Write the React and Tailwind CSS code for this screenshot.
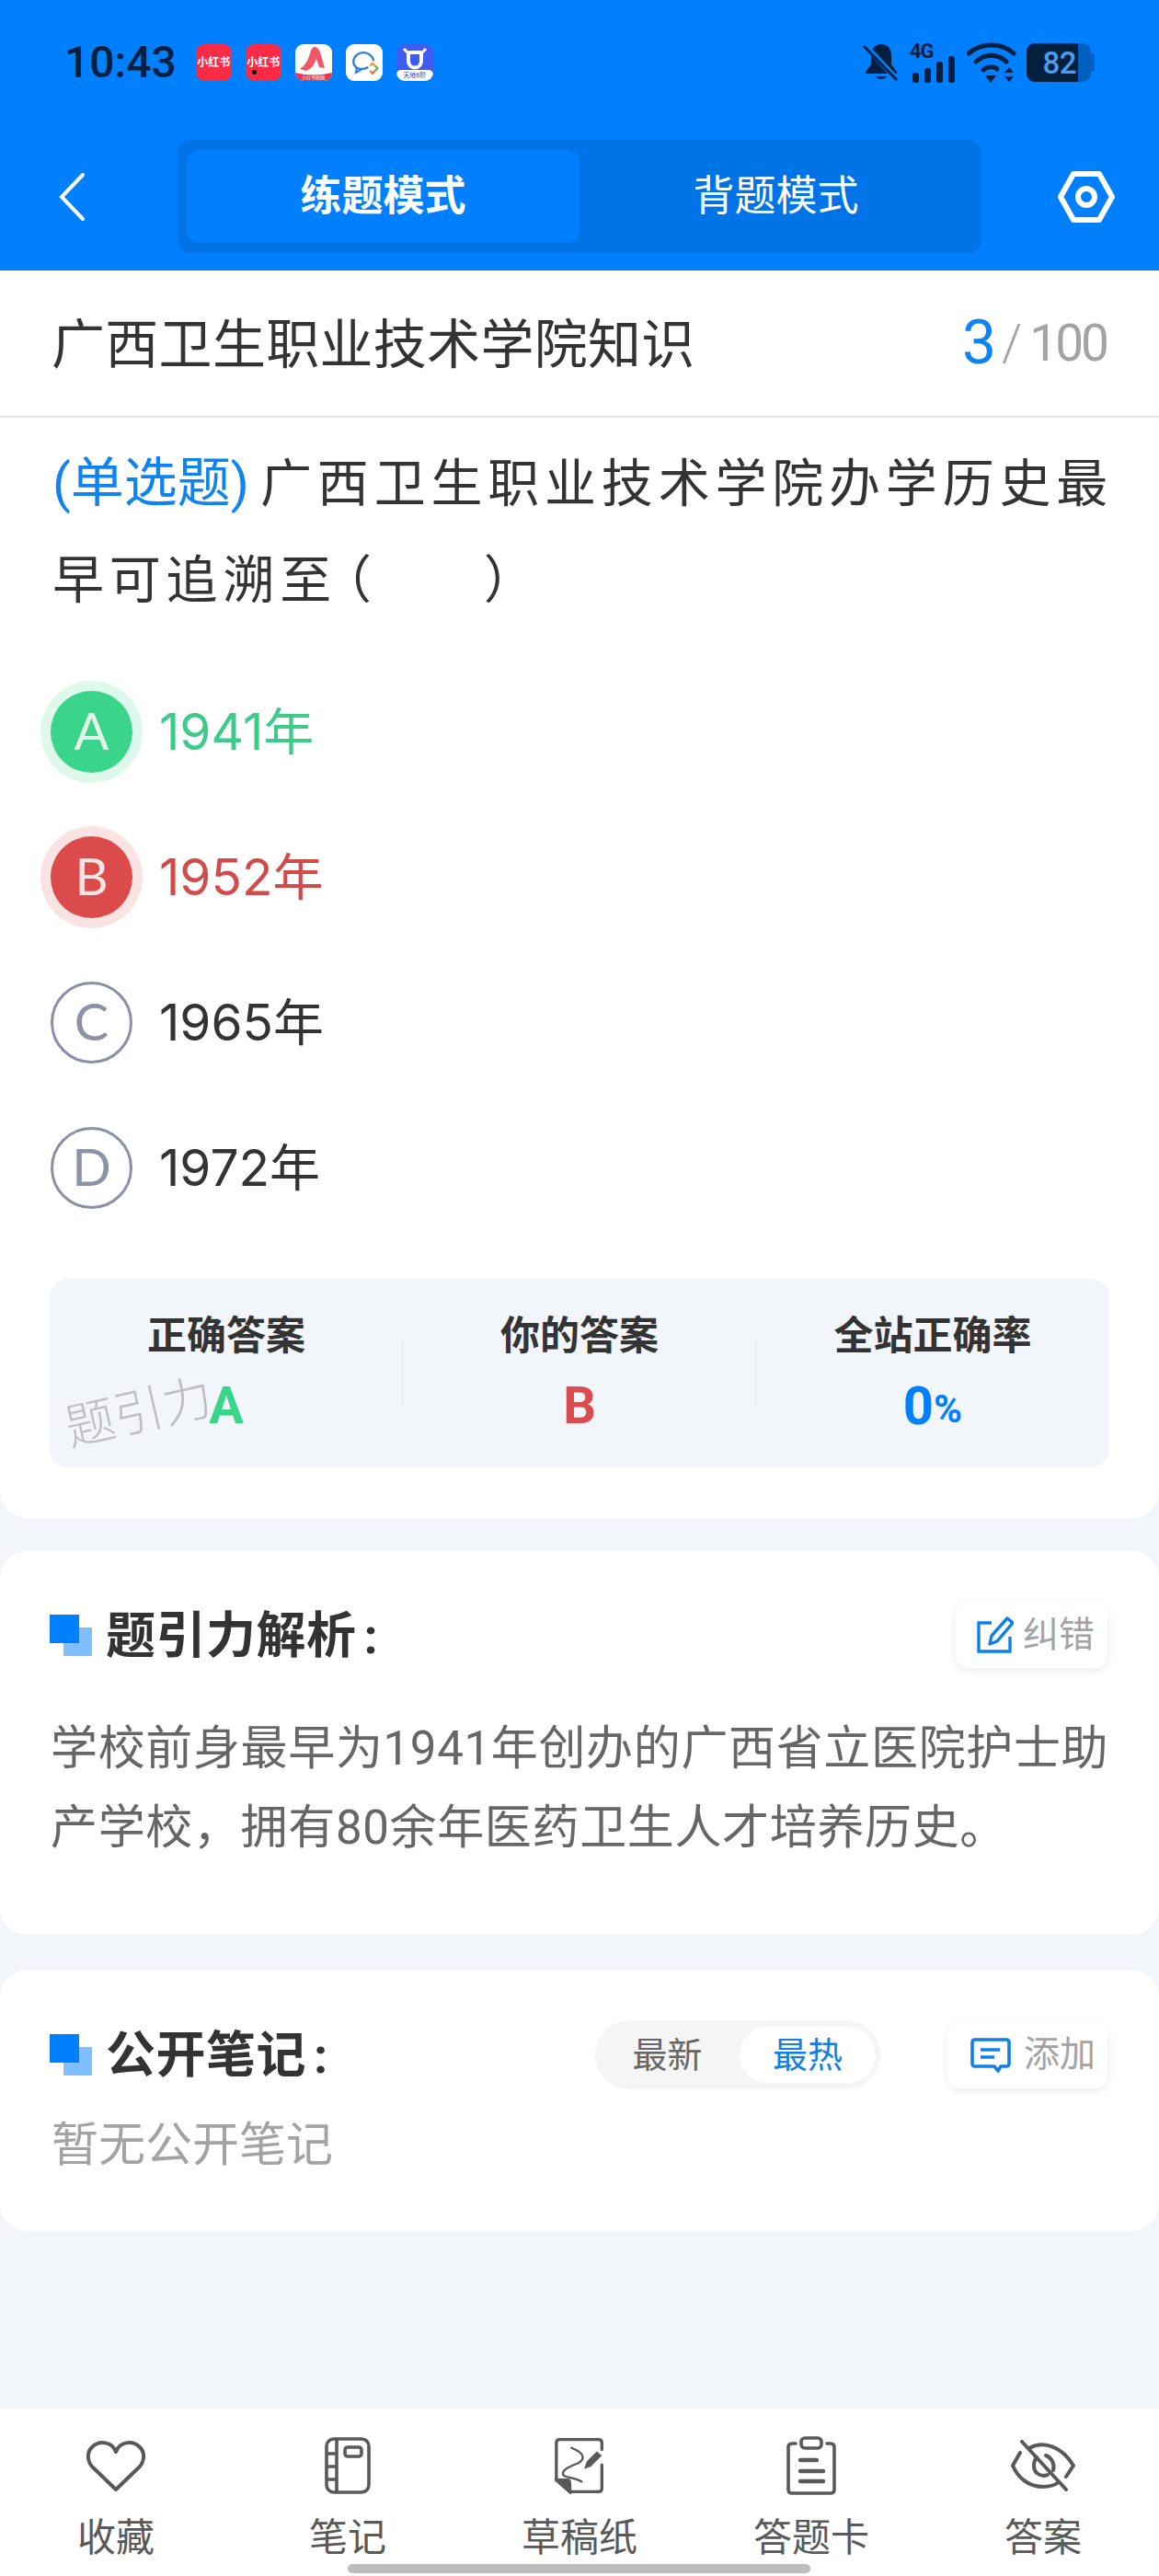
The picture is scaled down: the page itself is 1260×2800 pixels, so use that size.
import React from 'react';

const SquareMark = () => (
  <div className="relative w-[46px] h-[45px] shrink-0">
    <div className="absolute left-[15px] top-[14px] w-[31px] h-[31px] bg-[#80bfff]" />
    <div className="absolute left-0 top-0 w-[32px] h-[31px] bg-[#0080ff]" />
  </div>
);

const RedBookIcon = ({ dot }) => (
  <div className="relative w-[39px] h-[40px] rounded-[9px] bg-[#fb2a45] flex items-center justify-center">
    <span className="text-white text-[12px] font-bold leading-none whitespace-nowrap">小红书</span>
    {dot && <span className="absolute left-[5px] bottom-[5px] w-[9px] h-[9px] rounded-full bg-black border-2 border-[#fb2a45]" />}
  </div>
);

const AppIcons = () => (
  <div className="flex gap-[15px] ml-[21px]">
    <RedBookIcon />
    <RedBookIcon dot />
    <div className="relative w-[40px] h-[40px] rounded-[9px] bg-white overflow-hidden">
      <svg viewBox="0 0 40 40" className="w-full h-full">
        <path d="M5 27Q13 22 16 10Q18 2 22 3Q26 4 28 12L32 26L26 25L23 16Q19 27 12 29Z" fill="#f0586a" />
        <path d="M0 31Q20 36 40 31V40H0Z" fill="#e8344b" />
      </svg>
      <span className="absolute left-0 right-0 bottom-[1px] text-center text-white text-[5px] leading-none">小红书刷题</span>
    </div>
    <div className="w-[40px] h-[40px] rounded-[9px] bg-white flex items-center justify-center">
      <svg viewBox="0 0 40 40" className="w-[36px] h-[36px]" fill="none">
        <path d="M24 26C16 30 7 27 7 19C7 12 13 8 19 8C25 8 30 12 31 17" stroke="#2d7fd8" strokeWidth="2.6" strokeLinecap="round" />
        <path d="M11 26L10 32L16 29" stroke="#2d7fd8" strokeWidth="2.4" />
        <path d="M27 24L30 21L33 24" stroke="#f0a020" strokeWidth="2.4" />
        <path d="M33 24L36 27L33 30" stroke="#58b848" strokeWidth="2.4" />
        <path d="M33 30L30 33L27 30" stroke="#e8683a" strokeWidth="2.4" />
      </svg>
    </div>
    <div className="relative w-[40px] h-[40px] rounded-[9px] bg-[#3f5bf0] overflow-hidden">
      <svg viewBox="0 0 40 40" className="w-full h-full" fill="none">
        <path d="M13 9V18C13 28 27 28 27 18V9M13 9H27" stroke="white" strokeWidth="4" />
        <path d="M8 5L13 10M32 5L27 10" stroke="white" strokeWidth="3" />
      </svg>
      <div className="absolute left-0 right-0 bottom-0 h-[12px] bg-white rounded-t-[5px] text-center text-[#2d3fb0] text-[7px] leading-[12px] whitespace-nowrap">天地6阶</div>
    </div>
  </div>
);

const StatusIcons = () => (
  <div className="flex items-center text-[#03203f]">
    <svg viewBox="0 0 40 42" className="w-[40px] h-[42px]">
      <path d="M20 1C13 1 9 6 9 13V23L3 31V33H37V31L31 23V13C31 6 27 1 20 1Z" fill="#03203f" />
      <path d="M14 36C15 40 25 40 26 36Z" fill="#03203f" />
      <path d="M1 1L38 40" stroke="#0080ff" strokeWidth="6" />
      <path d="M1 3L37 40" stroke="#03203f" strokeWidth="3" />
    </svg>
    <svg viewBox="0 0 50 44" className="w-[50px] h-[44px] ml-[11px] overflow-visible">
      <text x="0" y="17" fontSize="22" fontWeight="700" fontFamily="Roboto, sans-serif" letterSpacing="-1" fill="#03203f">4G</text>
      <rect x="3" y="33" width="7" height="11" rx="2.5" fill="#03203f" />
      <rect x="16" y="28" width="7" height="16" rx="2.5" fill="#03203f" />
      <rect x="29" y="21" width="7" height="23" rx="2.5" fill="#03203f" />
      <rect x="42" y="15" width="7" height="29" rx="2.5" fill="#03203f" />
    </svg>
    <svg viewBox="0 0 54 44" className="w-[54px] h-[44px] ml-[12px]" fill="none" stroke="#03203f" strokeWidth="5" strokeLinecap="round">
      <path d="M2 12C16 0 38 0 51 12" />
      <path d="M10 21C20 12 33 12 43 21" />
      <path d="M18 30C22 26 30 26 33 29" />
      <path d="M20 36H32L26 44Z" fill="#03203f" stroke="none" />
      <path d="M46 27L51 33H41Z" fill="#03203f" stroke="none" />
      <path d="M41 37H51L46 43Z" fill="#03203f" stroke="none" />
    </svg>
    <div className="flex items-center ml-[11px]">
      <div className="w-[70px] h-[42px] rounded-[9px] bg-[#0060bf] overflow-hidden flex">
        <div className="w-[56px] h-full bg-[#03203f] flex items-center justify-end pr-[2px] font-['Roboto',sans-serif] text-[#4a9df0] text-[33px] font-medium leading-none tracking-[-0.5px]">82</div>
      </div>
      <div className="w-[4px] h-[20px] rounded-r-[3px] bg-[#0060bf]" />
    </div>
  </div>
);

const Option = ({ letter, text, state }) => {
  let circle = 'border-[3px] border-[#8a90a5] text-[#8c93a8]';
  let label = 'text-[#333333]';
  if (state === 'right') {
    circle = 'bg-[#3ad48a] text-[#dff8ea] shadow-[0_0_0_11px_#def8ec]';
    label = 'text-[#3ecb8a]';
  }
  if (state === 'wrong') {
    circle = 'bg-[#dc4b4b] text-[#fbe4e4] shadow-[0_0_0_11px_#fae3e3]';
    label = 'text-[#d34a4a]';
  }
  return (
    <div className="h-[158px] flex items-center">
      <div className={`w-[89px] h-[89px] rounded-full flex items-center justify-center ml-px font-['Lato',sans-serif] text-[56px] leading-none pb-[2px] ${circle}`}>
        {letter}
      </div>
      <span className={`ml-[29px] font-['Inter','Noto_Sans_CJK_SC',sans-serif] text-[55px] leading-none ${label}`}>{text}</span>
    </div>
  );
};

const Stat = ({ title, children, divider }) => (
  <div className="relative flex-1 flex flex-col items-center">
    {divider && <div className="absolute right-0 top-[67px] h-[72px] w-px bg-[#e6e8ea]" />}
    <div className="mt-[37px] text-[43px] leading-[50px] font-bold text-[#333333] whitespace-nowrap">{title}</div>
    <div className="mt-[26px] h-[50px] flex items-center justify-center">{children}</div>
  </div>
);

const Tab = ({ label, children }) => (
  <div className="flex flex-col items-center pt-[29px]">
    <div className="h-[66px] flex items-center justify-center">{children}</div>
    <div className="mt-[21px] text-[42px] leading-[50px] text-[#595959] whitespace-nowrap">{label}</div>
  </div>
);

const App = () => (
  <div className="relative w-[1260px] h-[2800px] flex flex-col bg-[#f2f5f9] overflow-hidden font-['Roboto','Noto_Sans_CJK_SC',sans-serif]">
    <header className="h-[294px] shrink-0 bg-[#0080ff]">
      <div className="h-[136px] flex items-center pl-[70px] pr-[70px]">
        <span className="text-[48px] leading-none text-[#03203f] font-medium">10:43</span>
        <AppIcons />
        <div className="ml-auto">
          <StatusIcons />
        </div>
      </div>
      <div className="mt-[16px] flex items-center pl-[64px]">
        <svg viewBox="0 0 28 52" className="w-[28px] h-[52px]" fill="none" stroke="white" strokeWidth="4" strokeLinecap="round">
          <path d="M26 2L3 26L26 50" />
        </svg>
        <div className="ml-[101px] w-[874px] h-[123px] rounded-[14px] bg-[#0073e6] p-[10px] pt-[11px] flex">
          <div className="flex-1 h-[101px] rounded-[14px] bg-[#0080ff] flex items-center justify-center text-[45px] font-bold text-white">练题模式</div>
          <div className="flex-1 h-[101px] flex items-center justify-center text-[45px] text-white">背题模式</div>
        </div>
        <svg viewBox="0 0 62 56" className="ml-[83px] w-[62px] h-[56px]" fill="none" stroke="white">
          <path d="M17 3H45L59 28L45 53H17L3 28Z" strokeWidth="6" strokeLinejoin="round" />
          <circle cx="31" cy="28" r="9" strokeWidth="6" />
        </svg>
      </div>
    </header>

    <main className="relative bg-white rounded-b-[30px] px-[54px] pb-[55px]">
      <div className="-mx-[54px] px-[57px] h-[160px] flex items-center justify-between border-b-2 border-[#e3e3e3]">
        <span className="text-[58px] leading-none text-[#333333] -ml-[1px] pt-[3px] tracking-[0.3px]">广西卫生职业技术学院知识</span>
        <span className="flex items-center">
          <span className="text-[66px] leading-none text-[#0f84f0]">3</span>
          <span className="text-[56px] leading-none text-[#a3a3a3] font-light ml-[6px]">/</span>
          <span className="text-[55px] leading-none text-[#a3a3a3] ml-[8px] tracking-[-3px]">100</span>
        </span>
      </div>
      <p className="mt-[19px] text-[56px] leading-[105px] tracking-[5.8px] text-[#333333] ml-[3px] -mr-[10px]">
        <span className="text-[58px] text-[#0f84f0] tracking-[0px] mr-[12px]">(单选题)</span>广西卫生职业技术学院办学历史最早可追溯至<span className="-ml-[18px]">（</span><span className="inline-block w-[116px]" />）
      </p>
      <div className="mt-[32px]">
        <Option letter="A" text="1941年" state="right" />
        <Option letter="B" text="1952年" state="wrong" />
        <Option letter="C" text="1965年" />
        <Option letter="D" text="1972年" />
      </div>
      <div className="relative mt-[42px] h-[205px] rounded-[20px] bg-[#f2f5f9] flex">
        <Stat title="正确答案" divider>
          <span className="text-[56px] font-bold text-[#3ad48a] leading-none">A</span>
        </Stat>
        <Stat title="你的答案" divider>
          <span className="text-[56px] font-bold text-[#d94c4f] leading-none">B</span>
        </Stat>
        <Stat title="全站正确率">
          <span className="text-[58px] font-bold text-[#0080ff] leading-none">0</span>
          <span className="text-[42px] font-bold text-[#0080ff] leading-none mt-[8px]">%</span>
        </Stat>
        <span className="absolute left-[16px] top-[119px] -rotate-[13deg] text-[54px] leading-none font-light text-[#bdbfc2] whitespace-nowrap">题引力</span>
      </div>
    </main>

    <section className="mt-[36px] bg-white rounded-[30px] pl-[54px] pr-[56px] pt-[55px] pb-[73px]">
      <div className="h-[72px] flex items-center justify-between">
        <div className="flex items-center">
          <SquareMark />
          <span className="ml-[15px] pt-[3px] text-[54px] leading-none font-bold text-[#333333] tracking-[0.5px]">题引力解析<span className="ml-[8px]">:</span></span>
        </div>
        <div className="w-[165px] h-[72px] rounded-[14px] bg-white shadow-[0_3px_10px_rgba(0,0,0,0.08)] flex items-center pl-[23px]">
          <svg viewBox="0 0 40 40" className="w-[40px] h-[40px]" fill="none" stroke="#1080e8" strokeWidth="3.4">
            <path d="M16 7H2V38H36V22" />
            <path d="M33 2L39 7L22 27L14 30L16 21Z" strokeLinejoin="round" />
          </svg>
          <span className="ml-[10px] text-[39px] leading-none text-[#a3a3a3]">纠错</span>
        </div>
      </div>
      <p className="mt-[45px] text-[51px] leading-[86px] text-[#666666] -mr-[6px] ml-[1px] tracking-[0.65px]">
        学校前身最早为1941年创办的广西省立医院护士助产学校，拥有80余年医药卫生人才培养历史。
      </p>
    </section>

    <section className="mt-[38px] bg-white rounded-[30px] pl-[54px] pr-[56px] pt-[55px] pb-[58px]">
      <div className="h-[75px] flex items-center">
        <SquareMark />
        <span className="ml-[15px] pt-[3px] text-[54px] leading-none font-bold text-[#333333] tracking-[0.5px]">公开笔记<span className="ml-[8px]">:</span></span>
        <div className="ml-auto w-[310px] h-[75px] rounded-full bg-[#f5f5f5] flex items-center pr-[5px]">
          <span className="w-[157px] text-center text-[38px] leading-none text-[#666666]">最新</span>
          <span className="w-[148px] h-[61px] rounded-full bg-white flex items-center justify-center text-[38px] leading-none text-[#1080e8]">最热</span>
        </div>
        <div className="ml-[73px] w-[174px] h-[73px] rounded-[14px] bg-white shadow-[0_3px_10px_rgba(0,0,0,0.08)] flex items-center pl-[25px]">
          <svg viewBox="0 0 44 38" className="w-[44px] h-[38px]" fill="none" stroke="#1080e8" strokeWidth="3.6">
            <path d="M5 2H39Q42 2 42 5V28Q42 31 39 31H33L30 36L26 31H5Q2 31 2 28V5Q2 2 5 2Z" strokeLinejoin="round" />
            <path d="M11 13H32M11 21H26" />
          </svg>
          <span className="ml-[14px] text-[39px] leading-none text-[#a3a3a3]">添加</span>
        </div>
      </div>
      <p className="mt-[26px] text-[51px] leading-[70px] text-[#a3a3a3] ml-[2px]">暂无公开笔记</p>
    </section>

    <nav className="mt-auto h-[182px] bg-white grid grid-cols-5">
      <Tab label="收藏">
        <svg viewBox="0 0 64 56" className="w-[64px] h-[56px]" fill="none" stroke="#595959" strokeWidth="4" strokeLinejoin="round">
          <path d="M32 13C28 2 14 0 6 8C0 14 1 23 6 29L32 54L58 29C63 23 64 14 58 8C50 0 36 2 32 13Z" />
        </svg>
      </Tab>
      <Tab label="笔记">
        <svg viewBox="0 0 50 62" className="w-[50px] h-[62px]" fill="none" stroke="#595959" strokeWidth="3.6">
          <rect x="2" y="2" width="46" height="58" rx="8" />
          <path d="M13 2V60M2 18H13M2 32H13M2 46H13" />
          <rect x="22" y="11" width="18" height="10" rx="3" />
        </svg>
      </Tab>
      <Tab label="草稿纸">
        <svg viewBox="0 0 60 66" className="w-[55px] h-[62px]" fill="none" stroke="#595959" strokeWidth="3.6" strokeLinecap="round">
          <path d="M18 64H52Q56 64 56 60V32M56 14V6Q56 2 52 2H6Q2 2 2 6V50L18 64" />
          <path d="M2 50H14Q18 50 18 54V64L2 50Z" fill="#595959" />
          <path d="M20 12C36 18 36 26 28 30C18 34 8 38 10 44C12 48 22 46 32 52" strokeWidth="2.6" />
          <path d="M38 28L50 16L56 21L43 34L35 37Z" fill="#595959" stroke="none" />
        </svg>
      </Tab>
      <Tab label="答题卡">
        <svg viewBox="0 0 54 64" className="w-[54px] h-[64px]" fill="none" stroke="#595959" strokeWidth="3.6" strokeLinecap="round">
          <path d="M10 8H6Q2 8 2 12V58Q2 62 6 62H48Q52 62 52 58V12Q52 8 48 8H44" />
          <rect x="16" y="2" width="22" height="11" rx="4" />
          <path d="M15 26H33M15 38H40M15 49H40" strokeWidth="4.4" />
        </svg>
      </Tab>
      <Tab label="答案">
        <svg viewBox="0 0 70 56" className="w-[70px] h-[56px]" fill="none" stroke="#595959" strokeWidth="4" strokeLinecap="round">
          <path d="M10 14L2 28C8 42 20 51 35 51C42 51 48 49 52 46" />
          <path d="M20 9C36 0 56 8 68 28L60 40" />
          <path d="M28 19C24 24 24 32 28 36C32 39 36 40 40 38" />
          <path d="M38 17C44 19 48 26 46 33" />
          <path d="M12 2L60 54" />
        </svg>
      </Tab>
    </nav>

    <div className="absolute left-[378px] top-[2787px] w-[503px] h-[10px] rounded-full bg-[#bdbdbd]" />
  </div>
);

export default App;
